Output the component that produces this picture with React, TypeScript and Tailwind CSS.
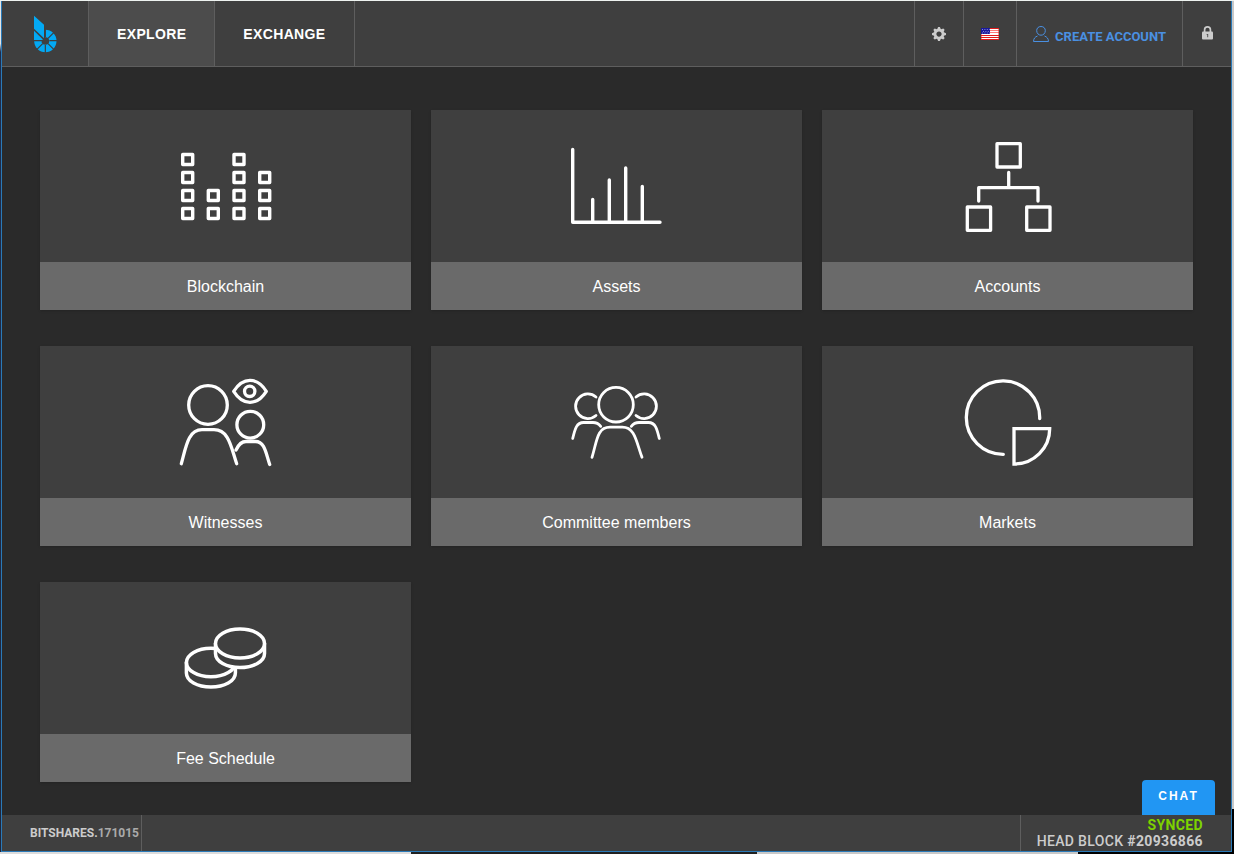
import type { ReactNode } from "react";

function Logo() {
  return (
    <svg width="24" height="38" viewBox="99 46 72 114" aria-hidden="true">
      <path d="M102 48L132 75V116L102 87Z" fill="#03a9f4" />
      <path d="M102 93L128 119V121H102Z" fill="#03a9f4" />
      <path d="M136 101.500A22.500 22.500 0 1 1 113.500 124" fill="none" stroke="#03a9f4" strokeWidth="22" />
      <path
        d="M136 86V112M136 136V160M100 123H124M148 123H172M144 116L162 98M128 132L110 150M144 132L162 150"
        fill="none"
        stroke="#3f3f3f"
        strokeWidth="3.500"
      />
    </svg>
  );
}

function GearIcon() {
  return (
    <svg width="14" height="14" viewBox="0 0 8 8" fill="currentColor" aria-hidden="true">
      <path d="M3.5 0l-.5 1.19c-.1.03-.19.08-.28.13l-1.19-.5-.72.72.5 1.19c-.05.1-.09.18-.13.28l-1.19.5v1l1.19.5c.04.1.08.18.13.28l-.5 1.19.72.72 1.19-.5c.09.04.18.09.28.13l.5 1.19h1l.5-1.19c.09-.04.19-.08.28-.13l1.19.5.72-.72-.5-1.19c.04-.09.09-.19.13-.28l1.19-.5v-1l-1.19-.5c-.03-.09-.08-.19-.13-.28l.5-1.19-.72-.72-1.19.5c-.09-.04-.19-.09-.28-.13l-.5-1.19h-1zm.5 2.5c.83 0 1.5.67 1.5 1.5s-.67 1.5-1.5 1.5-1.5-.67-1.5-1.5.67-1.5 1.5-1.5z" />
    </svg>
  );
}

function FlagIcon() {
  return (
    <svg width="18" height="12" viewBox="0 0 18 12" aria-hidden="true">
      <rect width="18" height="12" fill="#fff" />
      <path d="M0 .5H18M0 7.500H18M0 9.500H18M0 11.500H18" stroke="#e01b1b" />
      <path d="M9 2.500H18M9 4.500H18" stroke="#ff7b7b" strokeWidth="1.200" />
      <rect width="9" height="6" fill="#1a1a9c" />
      <path d="M1 1.500H9M2 3.500H9M1 5H9" stroke="#b9b9ee" strokeWidth=".7" strokeDasharray="1 1.400" />
      <path d="M.3 6V12M17.700 0V12" stroke="#e01b1b" strokeWidth=".6" />
    </svg>
  );
}

function UserIcon() {
  return (
    <svg width="16" height="16" viewBox="0 0 16 16" fill="none" stroke="currentColor" strokeWidth="1" aria-hidden="true">
      <path d="M8 .5C10.700 .5 12.300 2.200 12.300 4.700C12.300 7.300 10.400 9.200 8 9.200S3.700 7.300 3.700 4.700C3.700 2.200 5.300 .5 8 .5Z" />
      <path d="M4.500 10C2 10.900 .6 12.500 .5 15.500H15.500C15.400 12.500 14 10.900 11.500 10" />
    </svg>
  );
}

function LockIcon() {
  return (
    <svg width="11" height="14" viewBox="0 0 11 14" aria-hidden="true">
      <path d="M2.600 6V3.800A2.900 2.900 0 0 1 8.400 3.800V6" fill="none" stroke="currentColor" strokeWidth="1.700" />
      <rect y="5.500" width="11" height="8" rx="1" fill="currentColor" />
      <path d="M4.700 8H6.200V11.200H5.200V9H4.700Z" fill="#555" />
    </svg>
  );
}

function Glyph({ stroke, children }: { stroke: number; children: ReactNode }) {
  return (
    <svg
      width="101"
      height="100"
      viewBox="0 0 101 100"
      fill="none"
      stroke="#fff"
      strokeWidth={stroke}
      strokeLinecap="round"
      strokeLinejoin="round"
      aria-hidden="true"
    >
      {children}
    </svg>
  );
}

const blocks = [
  [12.7, 23.5], [12.7, 41.5], [12.7, 59.5], [12.7, 77.5],
  [38.3, 59.5], [38.3, 77.5],
  [64, 23.5], [64, 41.5], [64, 59.5], [64, 77.5],
  [89.7, 41.5], [89.7, 59.5], [89.7, 77.5],
];

const cards: { label: string; icon: ReactNode }[] = [
  {
    label: "Blockchain",
    icon: (
      <Glyph stroke={3.4}>
        {blocks.map(([x, y]) => (
          <rect key={`${x}-${y}`} x={x - 5} y={y - 5} width="10" height="10" />
        ))}
      </Glyph>
    ),
  },
  {
    label: "Assets",
    icon: (
      <Glyph stroke={3.4}>
        <path d="M6.700 13.500V86.300H94M26.700 86V63.500M43.300 86V44M59.700 86V32M76.300 86V50.500" />
      </Glyph>
    ),
  },
  {
    label: "Accounts",
    icon: (
      <Glyph stroke={3.3}>
        <rect x="40" y="7.700" width="23.300" height="23.300" />
        <rect x="10.300" y="71" width="23.300" height="23.300" />
        <rect x="69.700" y="71" width="23.300" height="23.300" />
        <path d="M51.700 36.500V51.700M21.700 65V51.700H81V65" />
      </Glyph>
    ),
  },
  {
    label: "Witnesses",
    icon: (
      <Glyph stroke={3.3}>
        <circle cx="33" cy="33" r="19.300" />
        <path d="M6.300 91.700C11 75 13 57.700 27 57.700H39C54 57.700 56 75 61.700 91.700" />
        <circle cx="75.300" cy="52.700" r="13.400" />
        <path d="M61 78C64 71.500 67 69.500 71 69.500H80.500C90 69.500 91 82 94.700 92.500" />
        <path d="M58.700 19.300C68 4.700 82 4.700 91.300 19.300C82 34 68 34 58.700 19.300Z" />
        <circle cx="74.700" cy="19.300" r="5.200" />
      </Glyph>
    ),
  },
  {
    label: "Committee members",
    icon: (
      <Glyph stroke={2.8}>
        <circle cx="50" cy="32.700" r="17.300" />
        <path d="M26 85.300C31 69 31 55.200 44 55.200H56.300C69 55.200 70 69 76 85.300" />
        <path d="M30 25A12.300 12.300 0 1 0 30 43.500M6.700 66.500C9 57 10.500 50.500 17.500 50.500H27C30.500 50.500 32.500 51.500 34.700 54.300" />
        <path d="M70 25A12.300 12.300 0 1 1 70 43.500M93.300 66.500C91 57 89.500 50.500 82.500 50.500H73C69.500 50.500 67.500 51.500 65.300 54.300" />
      </Glyph>
    ),
  },
  {
    label: "Markets",
    icon: (
      <Glyph stroke={3.3}>
        <path d="M82.700 46.500A36.700 36.700 0 1 0 46.300 82.300" />
        <path d="M57 56.700H92.700C92.700 76 77 92 57 92Z" strokeLinejoin="miter" />
      </Glyph>
    ),
  },
  {
    label: "Fee Schedule",
    icon: (
      <Glyph stroke={3.5}>
        <path d="M11.400 54.500V65C11.400 73 22.300 79 35.900 79S60.400 73 60.400 65V54.500" />
        <ellipse cx="35.900" cy="54.500" rx="24.500" ry="14.300" />
        <path d="M40.500 35.500V45.500C40.500 53.500 51.400 59.500 65 59.500S89.500 53.500 89.500 45.500V35.500Z" fill="#3f3f3f" />
        <ellipse cx="65" cy="35.500" rx="24.500" ry="14.500" fill="#3f3f3f" />
      </Glyph>
    ),
  },
];

function Header() {
  return (
    <header className="flex h-[66px] border-b border-[#5e5e5e] bg-[#3f3f3f]">
      <nav className="flex text-sm font-bold tracking-wide text-white">
        <a href="#home" aria-label="BitShares" className="flex w-[86px] items-center justify-center">
          <Logo />
        </a>
        <a href="#explore" className="flex items-center border-x border-[#5e5e5e] bg-[#4c4c4c] px-7">
          EXPLORE
        </a>
        <a href="#exchange" className="flex items-center border-r border-[#5e5e5e] px-7">
          EXCHANGE
        </a>
      </nav>
      <div className="ml-auto flex text-[#cccccc]">
        <button aria-label="Settings" className="flex w-[49px] items-center justify-center border-l border-[#5e5e5e]">
          <GearIcon />
        </button>
        <button aria-label="Language" className="flex w-[53px] items-center justify-center border-l border-[#5e5e5e]">
          <FlagIcon />
        </button>
        <a
          href="#create-account"
          className="flex items-center gap-1.5 border-l border-[#5e5e5e] px-4 font-[Roboto,sans-serif] text-[13px] font-bold text-[#4a90e2]"
        >
          <UserIcon />
          <span className="pt-1.5">CREATE ACCOUNT</span>
        </a>
        <button aria-label="Unlock" className="flex w-[49px] items-center justify-center border-l border-[#5e5e5e] pb-0.5">
          <LockIcon />
        </button>
      </div>
    </header>
  );
}

function Footer() {
  return (
    <footer className="flex h-9 bg-[#3f3f3f] font-[Roboto,sans-serif] font-bold text-[#cccccc]">
      <div className="flex items-center border-r border-[#5e5e5e] pr-0.5 pl-7 text-xs">
        BITSHARES.<span className="text-[#aaaaaa]">171015</span>
      </div>
      <div className="ml-auto flex flex-col justify-center border-l border-[#5e5e5e] pr-7 pl-4 text-right text-sm leading-4 tracking-wide">
        <span className="text-[#7ed300]">SYNCED</span>
        <span>
          <span className="font-medium">HEAD BLOCK </span>#20936866
        </span>
      </div>
    </footer>
  );
}

export default function App() {
  return (
    <div className="flex min-h-screen flex-col bg-[#c8c8c8] font-['Liberation_Sans',Arial,sans-serif]">
      <div className="h-px bg-[#eef3f0]" />
      <div className="flex flex-1">
        <div className="w-px bg-linear-to-b from-[#e5e5e5] from-5% via-[#1f2c4a] via-6% to-[#20263a]" />
        <div className="flex flex-1 flex-col border-x border-b border-[#2a7ab8] bg-[#2a2a2a]">
          <Header />
          <main className="relative flex-1 px-[38px] pt-[43px] pb-8">
            <div className="grid grid-cols-3 gap-x-5 gap-y-9">
              {cards.map((card) => (
                <a key={card.label} href="#explore" className="flex flex-col shadow-sm">
                  <span className="flex h-[152px] items-center justify-center bg-[#3f3f3f]">{card.icon}</span>
                  <span className="bg-[#6a6a6a] pt-[13px] pb-[11px] text-center text-base text-white">{card.label}</span>
                </a>
              ))}
            </div>
            <button className="absolute right-4 bottom-0 h-[35px] w-[73px] rounded-t bg-[#2196f3] pb-1 text-xs font-bold tracking-[2px] text-white">
              CHAT
            </button>
          </main>
          <Footer />
        </div>
        <div className="w-[2px] bg-linear-to-b from-[#c8c8c8] from-95% to-black to-95%" />
      </div>
      <div className="flex h-[2px]">
        <div className="w-1/3 bg-[#dcdcdc]" />
        <div className="w-[28%] bg-[#202020]" />
        <div className="w-[26%] bg-[#c8c8c8]" />
        <div className="flex-1 bg-black" />
      </div>
    </div>
  );
}
